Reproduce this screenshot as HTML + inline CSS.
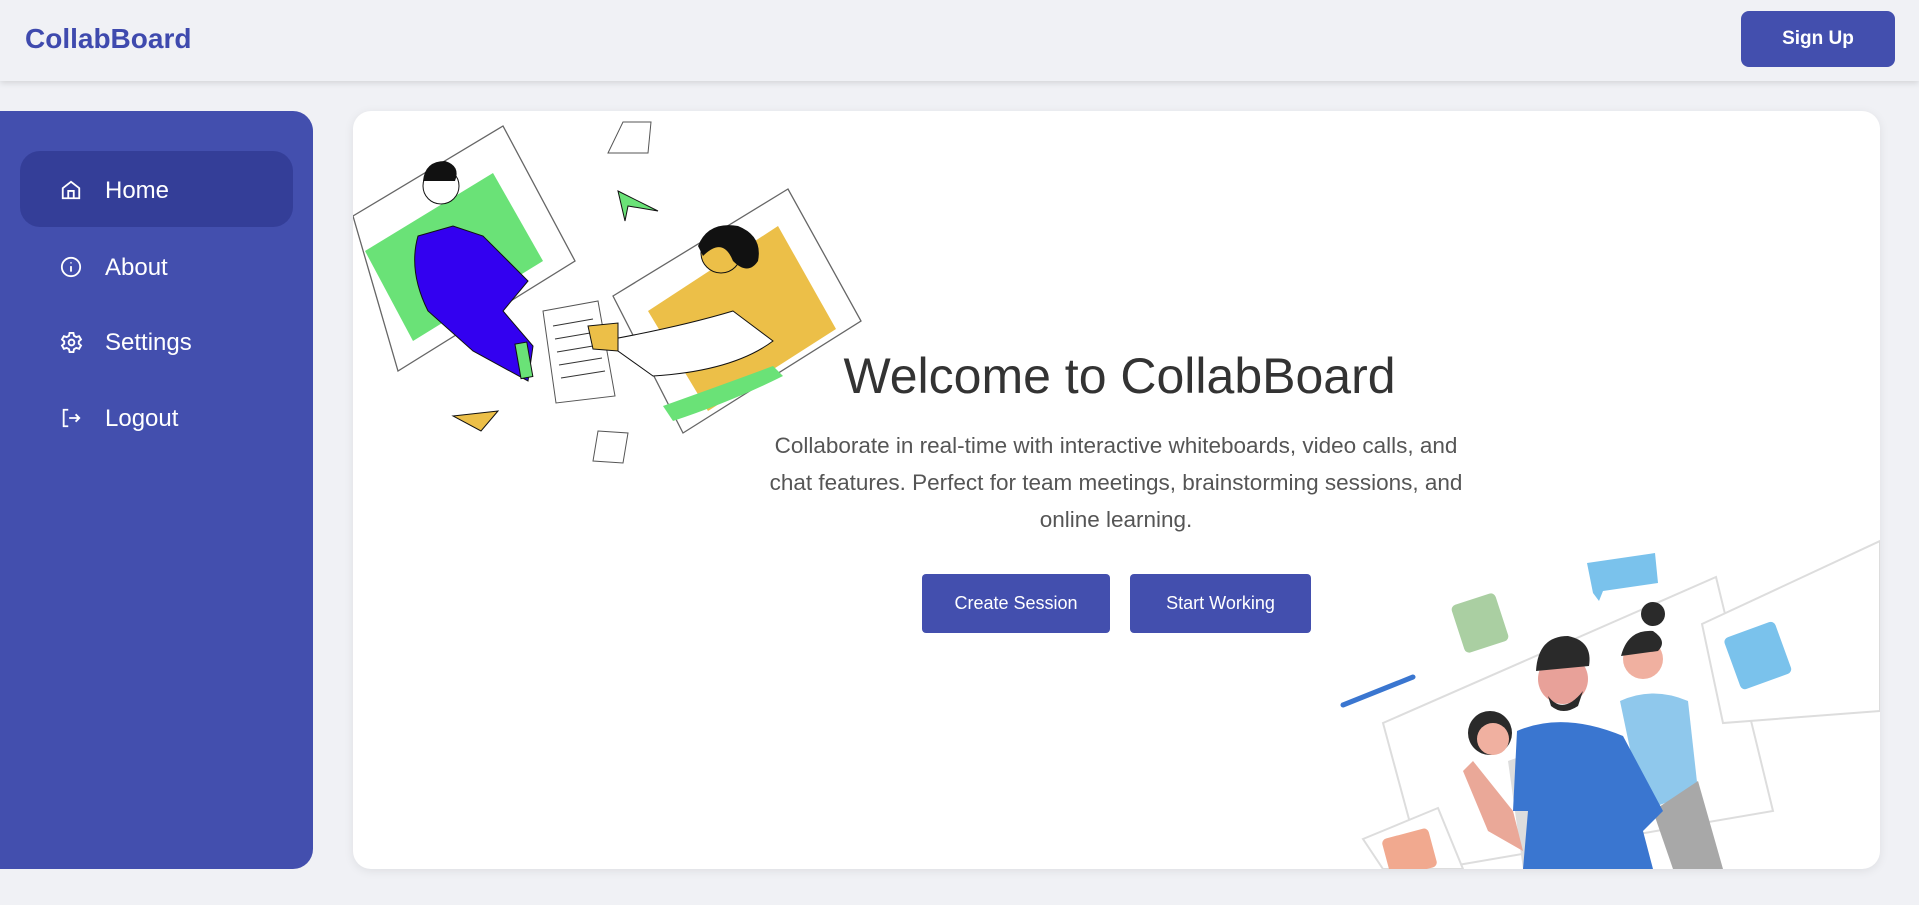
<!DOCTYPE html>
<html><head><meta charset="utf-8"><style>
*{margin:0;padding:0;box-sizing:border-box}
body{width:1919px;height:905px;background:#f0f1f5;font-family:"Liberation Sans",sans-serif;overflow:hidden;position:relative}
.hdr{position:absolute;left:0;top:0;width:1919px;height:81px;background:#f0f1f5;box-shadow:0 2px 6px rgba(0,0,0,.12)}
.logo{position:absolute;left:25px;top:23px;font-size:28px;font-weight:bold;color:#3f4aae}
.sign{position:absolute;left:1741px;top:11px;width:154px;height:56px;background:#434fae;border-radius:8px;color:#fff;font-weight:bold;font-size:19px;display:flex;align-items:center;justify-content:center}
.side{position:absolute;left:0;top:111px;width:313px;height:758px;background:#434fae;border-radius:0 20px 20px 0}
.item{position:absolute;left:20px;width:273px;height:76px;border-radius:20px;color:#fff;font-size:24px;display:flex;align-items:center;padding-left:85px;padding-top:3px}
.item svg{position:absolute;left:40px;top:28px}
.card{position:absolute;left:353px;top:111px;width:1527px;height:758px;background:#fff;border-radius:18px;box-shadow:0 2px 10px rgba(0,0,0,.08);overflow:hidden}
h1{position:absolute;left:0;width:1527px;text-align:center;top:236px;font-size:50px;font-weight:normal;color:#333;padding-left:6px}
p{position:absolute;left:313px;width:900px;top:316px;text-align:center;font-size:22.5px;line-height:37px;color:#555}
.btn{position:absolute;top:463px;height:59px;background:#434fae;color:#fff;border-radius:4px;font-size:18px;display:flex;align-items:center;justify-content:center}
</style></head><body>
<div class="hdr"><div class="logo">CollabBoard</div><div class="sign">Sign Up</div></div>
<div class="side">
<div class="item" style="top:40px;background:#343e98"><svg width="22" height="22" viewBox="0 0 24 24" fill="none" stroke="#fff" stroke-width="2"><path d="M3 10l9-7 9 7v11H3z"/><path d="M9 21v-8h6v8"/></svg>Home</div>
<div class="item" style="top:117px"><svg width="22" height="22" viewBox="0 0 24 24" fill="none" stroke="#fff" stroke-width="2"><circle cx="12" cy="12" r="10"/><path d="M12 11v6M12 7v1"/></svg>About</div>
<div class="item" style="top:192px"><svg width="23" height="23" viewBox="0 0 24 24" fill="none" stroke="#fff" stroke-width="2"><circle cx="12" cy="12" r="3"/><path d="M10 2h4l.6 3 2.4 1.4 2.9-1 2 3.4-2.3 2v2.4l2.3 2-2 3.4-2.9-1L14.6 19 14 22h-4l-.6-3L7 17.6l-2.9 1-2-3.4 2.3-2v-2.4l-2.3-2 2-3.4 2.9 1L9.4 5z"/></svg>Settings</div>
<div class="item" style="top:268px"><svg width="22" height="22" viewBox="0 0 24 24" fill="none" stroke="#fff" stroke-width="2"><path d="M9 3H4v18h5M10 12h11M17 8l4 4-4 4"/></svg>Logout</div>
</div>
<div class="card">
<svg width="1527" height="758" style="position:absolute;left:0;top:0">
<g stroke="#666" stroke-width="1.3">
<polygon points="0,105 150,15 222,150 45,260" fill="#fff"/>
<polygon points="12,140 140,62 190,150 60,230" fill="#6ae277" stroke="none"/>
<polygon points="260,185 435,78 508,210 330,322" fill="#fff"/>
<polygon points="295,200 425,115 483,218 355,300" fill="#ecbf48" stroke="none"/>
</g>
<path d="M65,125 L100,115 L130,125 L175,170 L150,200 L180,235 L175,270 L120,240 L75,200 Q55,160 65,125Z" fill="#3300f0" stroke="#111"/>
<rect x="165" y="232" width="12" height="35" fill="#6ae277" stroke="#111" transform="rotate(-10 170 250)"/>
<circle cx="88" cy="75" r="18" fill="#fff" stroke="#111"/>
<path d="M70,70 Q72,50 92,50 Q108,55 102,70 Z" fill="#111"/>
<polygon points="190,200 245,190 262,285 203,292" fill="#fff" stroke="#555"/>
<g stroke="#333" stroke-width="1"><path d="M200,215 240,208M202,228 243,221M204,241 246,234M206,254 249,247M208,267 252,260"/></g>
<path d="M260,228 Q330,215 380,200 L420,230 Q380,260 300,265 L265,240Z" fill="#fff" stroke="#111"/>
<path d="M235,215 L265,212 L265,240 L240,238Z" fill="#ecbf48" stroke="#111"/>
<path d="M310,295 Q380,270 420,255 L430,265 Q380,290 320,310Z" fill="#6ae277"/>
<circle cx="368" cy="142" r="20" fill="#ecbf48" stroke="#111"/>
<path d="M345,135 Q355,110 385,115 Q410,125 405,150 Q395,165 380,150 Q370,125 350,145Z" fill="#111"/>
<polygon points="265,80 305,100 275,95 272,110" fill="#6ae277" stroke="#111"/>
<polygon points="100,305 145,300 128,320" fill="#ecbf48" stroke="#111"/>
<polygon points="270,11 298,11 295,42 255,42" fill="#fff" stroke="#555"/>
<polygon points="245,320 275,322 270,352 240,350" fill="#fff" stroke="#555"/>
<g stroke="#ddd" stroke-width="2" fill="#fff">
<polygon points="1030,612 1363,466 1420,700 1070,760"/>
<polygon points="1349,513 1527,430 1527,600 1370,612"/>
<polygon points="1010,728 1085,697 1110,758 1030,758"/>
</g>
<line x1="990" y1="594" x2="1060" y2="566" stroke="#3a76d0" stroke-width="5" stroke-linecap="round"/>
<rect x="1104" y="487" width="46" height="50" rx="5" fill="#aacfa2" transform="rotate(-18 1127 512)"/>
<path d="M1234,452 L1302,442 L1305,472 L1250,480 L1246,490 L1240,482 Z" fill="#7ac2ec"/>
<rect x="1378" y="517" width="54" height="55" rx="5" fill="#7ac2ec" transform="rotate(-20 1405 545)"/>
<rect x="1032" y="722" width="48" height="40" rx="5" fill="#f1a98f" transform="rotate(-15 1056 740)"/>
<path d="M1267,590 Q1300,575 1335,590 L1345,680 L1290,700Z" fill="#8fc8ec"/>
<path d="M1300,700 L1345,670 L1370,758 L1320,758Z" fill="#a8a8a8"/>
<circle cx="1290" cy="548" r="20" fill="#f0b0a0"/>
<circle cx="1300" cy="503" r="12" fill="#2a2a2a"/>
<path d="M1268,545 Q1275,518 1300,520 Q1315,530 1305,540 Z" fill="#2a2a2a"/>
<path d="M1155,650 L1210,630 L1215,758 L1170,758Z" fill="#ddd"/>
<circle cx="1137" cy="622" r="22" fill="#2a2a2a"/>
<circle cx="1140" cy="628" r="16" fill="#f0b0a0"/>
<path d="M1110,660 L1135,720 L1170,740 L1160,700 L1120,650Z" fill="#eaa898"/>
<path d="M1164,620 Q1210,600 1270,625 L1310,700 L1290,720 L1300,758 L1170,758 L1175,700 L1160,700Z" fill="#3a76d0"/>
<circle cx="1210" cy="568" r="25" fill="#e8a199"/>
<path d="M1183,560 Q1185,525 1215,525 Q1240,530 1236,555 Z" fill="#2a2a2a"/>
<path d="M1195,585 Q1210,605 1230,580 L1225,595 Q1210,605 1198,595Z" fill="#2a2a2a"/>
</svg>
<h1>Welcome to CollabBoard</h1>
<p>Collaborate in real-time with interactive whiteboards, video calls, and<br>chat features. Perfect for team meetings, brainstorming sessions, and<br>online learning.</p>
<div class="btn" style="left:569px;width:188px">Create Session</div>
<div class="btn" style="left:777px;width:181px">Start Working</div>
</div>
</body></html>
